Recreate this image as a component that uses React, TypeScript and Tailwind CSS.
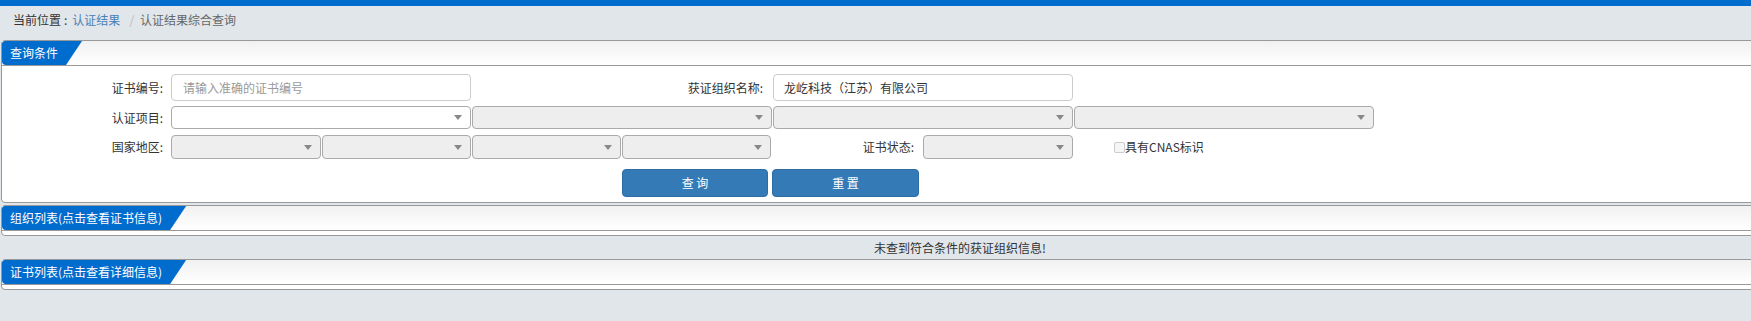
import React from 'react';

const font = "font-['Noto_Sans_CJK_SC','Microsoft_YaHei',sans-serif]";

const Select: React.FC<{ width: string; height: string; disabled?: boolean }> = ({ width, height, disabled = true }) => (
  <div
    className={`${width} ${height} flex items-center justify-end pr-[8px] rounded-[4px] border border-[#aaa] ${
      disabled ? 'bg-[#eee]' : 'bg-white'
    }`}
  >
    <span className="w-0 h-0 border-x-[4px] border-x-transparent border-t-[5px] border-t-[#888]" />
  </div>
);

const PanelHeader: React.FC<{ title: string }> = ({ title }) => (
  <div className="h-[25px] flex bg-gradient-to-b from-[#f1f1f1] to-white border-b border-[#999]">
    <div className="h-[24px] flex items-center pl-[8px] pr-[24px] bg-[#006cce] text-white text-[12px] leading-[16px] rounded-tl-[3px] rounded-bl-[4px] [clip-path:polygon(0_0,100%_0,calc(100%-16px)_100%,0_100%)]">
      {title}
    </div>
  </div>
);

export default function App() {
  return (
    <div className={`w-full min-h-screen overflow-hidden bg-[#e1e6ea] text-[#333] ${font}`}>
      <div className="w-[1920px]">
        {/* top bar */}
        <div className="h-[6px] bg-[#006cce]" />

        {/* breadcrumb */}
        <div className="h-[34px] pt-[6px] pl-[13px] text-[12px] leading-[16px]">
          <span className="text-[#333]">当前位置</span>
          <span className="text-[#333] ml-[3px] mr-[5px]">:</span>
          <span className="text-[#4a80b8]">认证结果</span>
          <span className="text-[#bbb] ml-[9px] mr-[6px]">/</span>
          <span className="text-[#666]">认证结果综合查询</span>
        </div>

        {/* 查询条件 */}
        <div className="ml-px mr-px bg-white border border-[#999] rounded-[4px]">
          <PanelHeader title="查询条件" />
          <div className="pt-[8px] pb-[5px] text-[12px] leading-[16px]">
            {/* row 1 */}
            <div className="flex items-center h-[27px] mb-[5px]">
              <div className="w-[161px] text-right">证书编号:</div>
              <div className="ml-[8px] w-[300px] h-[27px] flex items-center pl-[11px] border border-[#ccc] rounded-[4px] text-[#999]">
                请输入准确的证书编号
              </div>
              <div className="w-[292px] text-right">获证组织名称:</div>
              <div className="ml-[10px] w-[300px] h-[27px] flex items-center pl-[10px] border border-[#ccc] rounded-[4px] text-[#333]">
                龙屹科技（江苏）有限公司
              </div>
            </div>

            {/* row 2 */}
            <div className="flex items-center h-[23px] mb-[6px]">
              <div className="w-[161px] text-right">认证项目:</div>
              <div className="ml-[8px] flex gap-[1px]">
                <Select width="w-[300px]" height="h-[23px]" disabled={false} />
                <Select width="w-[300px]" height="h-[23px]" />
                <Select width="w-[300px]" height="h-[23px]" />
                <Select width="w-[300px]" height="h-[23px]" />
              </div>
            </div>

            {/* row 3 */}
            <div className="flex items-center h-[24px] mb-[10px]">
              <div className="w-[161px] text-right">国家地区:</div>
              <div className="ml-[8px] flex gap-[1px]">
                <Select width="w-[150px]" height="h-[24px]" />
                <Select width="w-[149px]" height="h-[24px]" />
                <Select width="w-[149px]" height="h-[24px]" />
                <Select width="w-[149px]" height="h-[24px]" />
              </div>
              <div className="w-[143px] text-right">证书状态:</div>
              <div className="ml-[9px]">
                <Select width="w-[150px]" height="h-[24px]" />
              </div>
              <div className="ml-[41px] flex items-center">
                <span className="w-[11px] h-[11px] border border-[#ccc] rounded-[2px] bg-[#f6f6f6]" />
                <span>具有CNAS标识</span>
              </div>
            </div>

            {/* buttons */}
            <div className="flex gap-[4px] ml-[620px]">
              <button className="w-[146px] h-[28px] rounded-[4px] bg-[#337ab7] border border-[#2e6da4] text-white text-[12px]">
                查 询
              </button>
              <button className="w-[147px] h-[28px] rounded-[4px] bg-[#337ab7] border border-[#2e6da4] text-white text-[12px]">
                重 置
              </button>
            </div>
          </div>
        </div>

        {/* 组织列表 */}
        <div className="mt-[2px] ml-px mr-px bg-white border border-[#999] rounded-[4px]">
          <PanelHeader title="组织列表(点击查看证书信息)" />
          <div className="h-[4px]" />
        </div>
        <div className="h-[23px] flex items-center justify-center text-[12px] leading-[16px] text-[#333]">
          未查到符合条件的获证组织信息!
        </div>

        {/* 证书列表 */}
        <div className="ml-px mr-px bg-white border border-[#999] rounded-[4px]">
          <PanelHeader title="证书列表(点击查看详细信息)" />
          <div className="h-[4px]" />
        </div>
      </div>
    </div>
  );
}
